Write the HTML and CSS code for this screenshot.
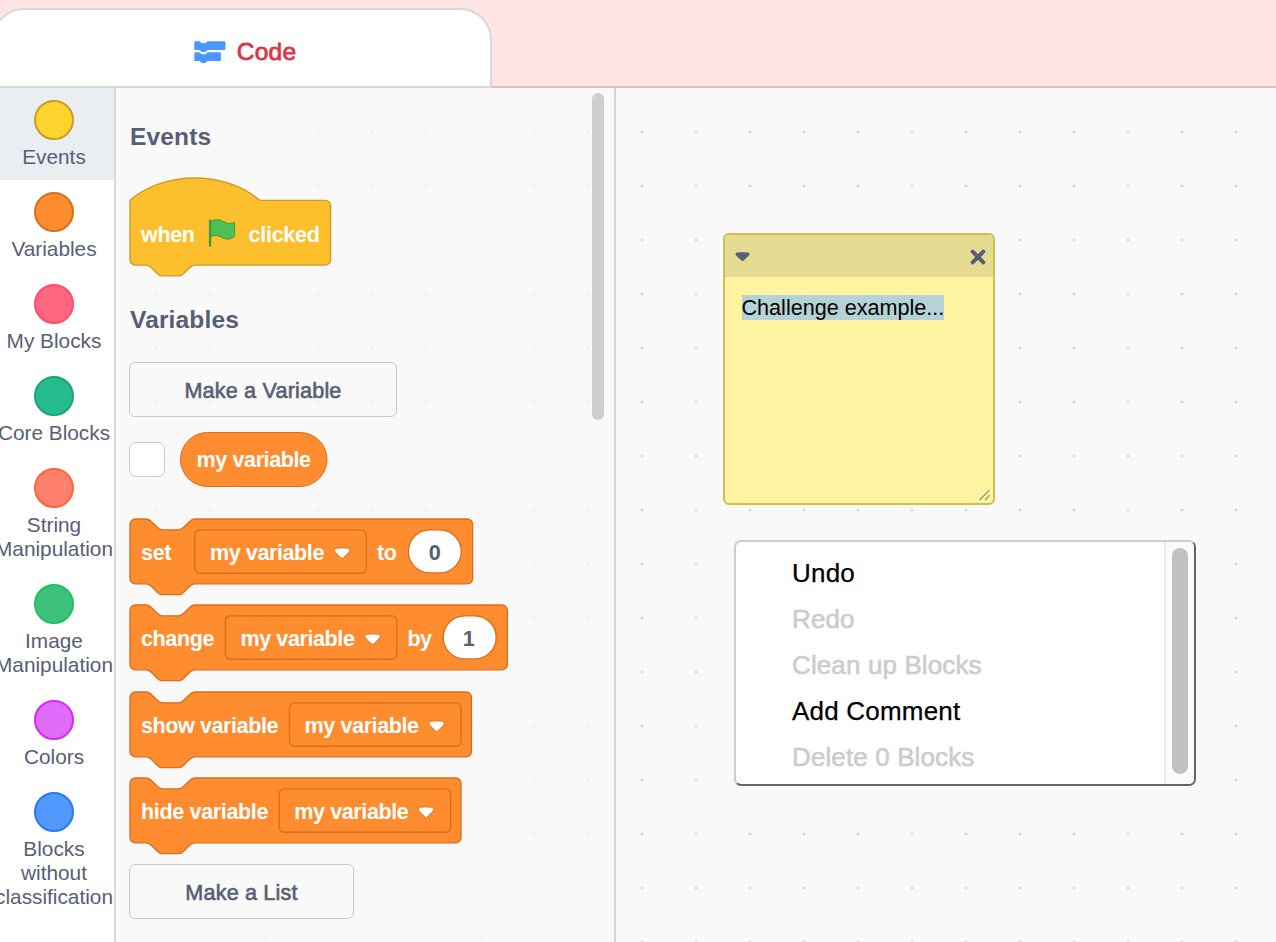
FILE: index.html
```html
<!DOCTYPE html>
<html lang="en">
<head>
<meta charset="utf-8">
<title>Code editor</title>
<link rel="stylesheet" href="styles.css">
</head>
<body>
<svg class="defs" aria-hidden="true">
  <defs>
    <g id="caret">
      <path transform="scale(1.35)" fill="#231f20" opacity=".1" d="M12.71,2.44A2.41,2.41,0,0,1,12,4.16L8.08,8.08a2.45,2.45,0,0,1-3.45,0L0.72,4.16A2.42,2.42,0,0,1,0,2.44,2.48,2.48,0,0,1,.71.71C1,0.47,1.43,0,6.36,0S11.75,0.46,12,.71A2.44,2.44,0,0,1,12.71,2.44Z"/>
      <path transform="scale(1.35)" fill="#fff" d="M6.36,7.79a1.43,1.43,0,0,1-1-.42L1.42,3.45a1.44,1.44,0,0,1,0-2c0.56-.56,9.31-0.56,9.87,0a1.44,1.44,0,0,1,0,2L7.37,7.37A1.43,1.43,0,0,1,6.36,7.79Z"/>
    </g>
  </defs>
</svg>
<div class="app">
  <header class="tabs">
    <div class="tab">
      <svg class="tab-icon" width="32" height="22" viewBox="0 0 32 22" fill="#4c97ff">
        <path d="M1.2 .3H5.2C6.4 .3 6.6 2.2 8 2.2H11C12.4 2.2 12.6 .3 14 .3H30.6Q31.5 .3 31.5 1.2V8Q31.5 9 30.6 9H14C12.6 9 12.6 11 11 11H8C6.6 11 6.4 9 5.2 9H1.2Q.3 9 .3 8V1.2Q.3 .3 1.2 .3Z"/>
        <path d="M1.2 11.3H5.2C6.4 11.3 6.6 13.2 8 13.2H11C12.4 13.2 12.6 11.3 14 11.3H26Q26.9 11.3 26.9 12.2V19Q26.9 20 26 20H14C12.6 20 12.6 21.9 11 21.9H8C6.6 21.9 6.4 20 5.2 20H1.2Q.3 20 .3 19V12.2Q.3 11.3 1.2 11.3Z"/>
      </svg>
      <span>Code</span>
    </div>
  </header>
  <main class="editor">
    <nav class="categories">
      <div class="category selected"><i class="bubble events"></i><span>Events</span></div>
      <div class="category"><i class="bubble variables"></i><span>Variables</span></div>
      <div class="category"><i class="bubble my-blocks"></i><span>My Blocks</span></div>
      <div class="category"><i class="bubble core"></i><span>Core Blocks</span></div>
      <div class="category"><i class="bubble string"></i><span>String<br>Manipulation</span></div>
      <div class="category"><i class="bubble image"></i><span>Image<br>Manipulation</span></div>
      <div class="category"><i class="bubble colors"></i><span>Colors</span></div>
      <div class="category"><i class="bubble other"></i><span>Blocks<br>without<br>classification</span></div>
    </nav>

    <section class="flyout">
      <div class="palette">
        <h2>Events</h2>
        <svg class="block hat" width="202" height="88">
          <path class="yellow" transform="translate(0 22.3) scale(1.35)" d="M0,0C25,-22 71,-22 96,0H144.6a4,4 0 0 1 4,4V44a4,4 0 0 1 -4,4H48c-2,0 -3,1 -4,2l-4,4c-1,1 -2,2 -4,2h-12c-2,0 -3,-1 -4,-2l-4,-4c-1,-1 -2,-2 -4,-2H4a4,4 0 0 1 -4,-4Z"/>
          <text x="11" y="63.5" textLength="54">when</text>
          <path fill="#4cbf56" stroke="#45993d" stroke-width="1" d="M80.5 43.500C85 41 90 41.200 94 43.800C98 46.300 101 45.800 103.500 44.400Q104.700 43.800 104.700 45V57.500Q104.700 58.700 103.700 59.300C99 62 95 61.300 91.500 59.300C88 57 84 56.800 80.500 59Z"/>
          <path fill="none" stroke="#45993d" stroke-width="2.4" stroke-linecap="round" d="M80.1 42.5V67.500"/>
          <text x="118.500" y="63.500" textLength="71.500">clicked</text>
        </svg>
        <h2 class="second">Variables</h2>
        <div class="button wide">Make a Variable</div>
        <div class="variable-row">
          <i class="checkbox"></i>
          <svg class="block reporter" width="148" height="55">
            <rect class="orange" x=".5" y=".5" width="146.500" height="54" rx="27"/>
            <text x="16.600" y="35" textLength="114.500">my variable</text>
          </svg>
        </div>
        <svg class="block stack" width="343" height="65">
          <path class="orange" transform="scale(1.35)" d="M0,4A4,4 0 0 1 4,0H12c2,0 3,1 4,2l4,4c1,1 2,2 4,2h12c2,0 3,-1 4,-2l4,-4c1,-1 2,-2 4,-2H249.800a4,4 0 0 1 4,4V44a4,4 0 0 1 -4,4H48c-2,0 -3,1 -4,2l-4,4c-1,1 -2,2 -4,2h-12c-2,0 -3,-1 -4,-2l-4,-4c-1,-1 -2,-2 -4,-2H4a4,4 0 0 1 -4,-4Z"/>
          <text x="11" y="40.500" textLength="30.500">set</text>
          <rect class="field" x="64.800" y="10.800" width="171.500" height="43.400" rx="5"/>
          <text x="79.900" y="40.500" textLength="114.500">my variable</text>
          <use href="#caret" x="203.500" y="28.200"/>
          <text x="247" y="40.500" textLength="20">to</text>
          <rect class="input" x="278.300" y="10.900" width="53" height="43" rx="21.500"/>
          <text class="value" x="304.800" y="40.500">0</text>
        </svg>
        <svg class="block stack" width="378" height="65">
          <path class="orange" transform="scale(1.35)" d="M0,4A4,4 0 0 1 4,0H12c2,0 3,1 4,2l4,4c1,1 2,2 4,2h12c2,0 3,-1 4,-2l4,-4c1,-1 2,-2 4,-2H275.500a4,4 0 0 1 4,4V44a4,4 0 0 1 -4,4H48c-2,0 -3,1 -4,2l-4,4c-1,1 -2,2 -4,2h-12c-2,0 -3,-1 -4,-2l-4,-4c-1,-1 -2,-2 -4,-2H4a4,4 0 0 1 -4,-4Z"/>
          <text x="11" y="40.500" textLength="73.500">change</text>
          <rect class="field" x="95.300" y="10.800" width="171.500" height="43.400" rx="5"/>
          <text x="110.400" y="40.500" textLength="114.500">my variable</text>
          <use href="#caret" x="234" y="28.200"/>
          <text x="277.500" y="40.500" textLength="24.500">by</text>
          <rect class="input" x="313.200" y="10.900" width="53" height="43" rx="21.500"/>
          <text class="value" x="338.800" y="40.500">1</text>
        </svg>
        <svg class="block stack" width="342" height="65">
          <path class="orange" transform="scale(1.35)" d="M0,4A4,4 0 0 1 4,0H12c2,0 3,1 4,2l4,4c1,1 2,2 4,2h12c2,0 3,-1 4,-2l4,-4c1,-1 2,-2 4,-2H248.900a4,4 0 0 1 4,4V44a4,4 0 0 1 -4,4H48c-2,0 -3,1 -4,2l-4,4c-1,1 -2,2 -4,2h-12c-2,0 -3,-1 -4,-2l-4,-4c-1,-1 -2,-2 -4,-2H4a4,4 0 0 1 -4,-4Z"/>
          <text x="11" y="40.500" textLength="137.500">show variable</text>
          <rect class="field" x="159.500" y="10.800" width="171.500" height="43.400" rx="5"/>
          <text x="174.600" y="40.500" textLength="114.500">my variable</text>
          <use href="#caret" x="298" y="28.200"/>
        </svg>
        <svg class="block stack" width="332" height="65">
          <path class="orange" transform="scale(1.35)" d="M0,4A4,4 0 0 1 4,0H12c2,0 3,1 4,2l4,4c1,1 2,2 4,2h12c2,0 3,-1 4,-2l4,-4c1,-1 2,-2 4,-2H241.200a4,4 0 0 1 4,4V44a4,4 0 0 1 -4,4H48c-2,0 -3,1 -4,2l-4,4c-1,1 -2,2 -4,2h-12c-2,0 -3,-1 -4,-2l-4,-4c-1,-1 -2,-2 -4,-2H4a4,4 0 0 1 -4,-4Z"/>
          <text x="11" y="40.500" textLength="127.500">hide variable</text>
          <rect class="field" x="149.200" y="10.800" width="171.500" height="43.400" rx="5"/>
          <text x="164.300" y="40.500" textLength="114.500">my variable</text>
          <use href="#caret" x="287.500" y="28.200"/>
        </svg>
        <div class="button list">Make a List</div>
      </div>
      <i class="flyout-thumb"></i>
    </section>

    <section class="workspace">
      <article class="comment">
        <header>
          <svg width="15" height="10" viewBox="0 0 15 10"><path fill="#575e75" d="M1.500 .6Q7.500 -.1 13.500 .6Q15.300 1.700 13.800 3.400L9 8.300Q7.500 9.500 6 8.300L1.200 3.400Q-.3 1.700 1.500 .6Z"/></svg>
          <svg width="16" height="16" viewBox="0 0 16 16"><path stroke="#575e75" stroke-width="4" stroke-linecap="round" d="M2.700 2.700L13.300 13.300M13.300 2.700L2.700 13.300"/></svg>
        </header>
        <p><mark>Challenge example...</mark></p>
        <svg class="resize" width="12" height="12" viewBox="0 0 12 12"><path stroke="#96916e" stroke-width="1.200" d="M.7 11L10.500 .8M6.200 11L10.700 6.200"/></svg>
      </article>
      <div class="menu">
        <ul>
          <li>Undo</li>
          <li class="disabled">Redo</li>
          <li class="disabled">Clean up Blocks</li>
          <li>Add Comment</li>
          <li class="disabled">Delete 0 Blocks</li>
        </ul>
        <div class="menu-track"><i></i></div>
      </div>
    </section>
  </main>
</div>
</body>
</html>
```

FILE: styles.css
```css
* { box-sizing: border-box; }
body {
  margin: 0;
  overflow: hidden;
  font-family: "Liberation Sans", Helvetica, Arial, sans-serif;
  color: #575e75;
}
.defs { display: block; width: 0; height: 0; }
.app { display: flex; flex-direction: column; width: 1276px; height: 942px; overflow: hidden; }

/* Tab bar */
.tabs {
  display: flex;
  align-items: flex-end;
  height: 88px;
  flex: none;
  background: #ffe4e4;
  background-image: linear-gradient(#d9c3c3, #d9c3c3);
  background-size: 100% 2px;
  background-position: bottom;
  background-repeat: no-repeat;
}
.tab {
  display: flex;
  align-items: center;
  justify-content: center;
  gap: 11px;
  width: 500px;
  height: 80px;
  margin-left: -8px;
  padding-top: 7px;
  padding-left: 6px;
  background: #fff;
  border: 2px solid #d9d9d9;
  border-radius: 32px 32px 0 0;
  color: #dc3545;
  font-size: 24.500px;
  letter-spacing: .25px;
  -webkit-text-stroke: .8px #dc3545;
}
.tab-icon { flex: none; }

/* Category list */
.editor { display: flex; flex: 1; min-height: 0; }
.categories {
  width: 116px;
  flex: none;
  overflow: hidden;
  background: #fff;
  border-right: 2px solid #d9d9d9;
}
.category {
  display: flex;
  flex-direction: column;
  align-items: center;
  gap: 5px;
  margin-left: -6px;
  padding: 12px 0 11px;
  font-size: 20.800px;
  line-height: 24px;
  text-align: center;
  white-space: nowrap;
}
.selected { background: #e9eef2; }
.bubble { width: 40px; height: 40px; border: 2px solid; border-radius: 50%; }
.events { background: #ffd42e; border-color: #cc9b22; }
.variables { background: #ff8c2e; border-color: #db6e1b; }
.my-blocks { background: #ff6680; border-color: #ff4d6a; }
.core { background: #24bc8c; border-color: #1fa278; }
.string { background: #ff816b; border-color: #ff6440; }
.image { background: #3dc17d; border-color: #20c05b; }
.colors { background: #e26cfa; border-color: #dc26f8; }
.other { background: #5199ff; border-color: #2878f8; }

/* Block palette */
.flyout {
  display: flex;
  justify-content: space-between;
  width: 500px;
  flex: none;
  padding: 5px 10px 0 14px;
  border-right: 2px solid #d3d3d3;
  background: #f9f9f9 radial-gradient(circle, #f1f1f1 1px, transparent 1.900px) 13px 17px / 54px 54px;
}
.palette { display: flex; flex-direction: column; align-items: flex-start; width: 400px; }
.palette h2 {
  margin: 28.500px 0 0;
  font-size: 24.500px;
  line-height: 30px;
  letter-spacing: .15px;
}
.palette .second { margin-top: 39px; }
.flyout-thumb { width: 12px; height: 327px; border-radius: 6px; background: #cecece; }
.block { display: block; flex: none; overflow: visible; }
.block text { fill: #fff; font-size: 21.600px; font-weight: bold; }
.block .value { fill: #575e75; text-anchor: middle; }
.hat { margin-top: 26px; }
.yellow { fill: #fdbf2d; stroke: #cc9b22; }
.orange { fill: #ff8c2e; stroke: #db6e1b; }
.field { fill: #ff8c2e; stroke: #db6e1b; stroke-width: 1.350px; }
.input { fill: #fff; stroke: #db6e1b; stroke-width: 1.350px; }
.button {
  display: flex;
  align-items: center;
  justify-content: center;
  flex: none;
  height: 55px;
  padding-top: 3px;
  border: 1.500px solid #c9c9c9;
  border-radius: 6px;
  font-size: 21.600px;
  letter-spacing: .18px;
  -webkit-text-stroke: .6px #575e75;
}
.wide { width: 268px; margin: 27px 0 0 -1px; }
.list { width: 225px; margin: -.500px 0 0 -1px; }
.variable-row {
  display: flex;
  align-items: center;
  gap: 15px;
  height: 56px;
  margin: 15px 0 31.500px -1px;
}
.checkbox { width: 36px; height: 35px; border: 1.500px solid #c9c9c9; border-radius: 7px; background: #fff; }
.stack { margin-bottom: 21.400px; }

/* Workspace */
.workspace {
  position: relative;
  flex: 1;
  background: #f9f9f9 radial-gradient(circle, #dadada 1px, transparent 1.900px) -1px 17px / 54px 54px;
}
.comment {
  position: absolute;
  left: 107px;
  top: 145px;
  width: 272px;
  height: 272px;
  border: 2px solid #cdbf51;
  border-radius: 6px;
  background: #fef3a1;
  overflow: hidden;
}
.comment header {
  display: flex;
  align-items: center;
  justify-content: space-between;
  height: 42px;
  padding: 2px 7px 0 10px;
  background: #e4da91;
}
.comment p { margin: 19px 16.500px; font-size: 21.600px; line-height: 24px; white-space: nowrap; }
.comment mark { background: #b4d3d6; color: #000; }
.resize { position: absolute; right: 2px; bottom: 2px; }
.menu {
  position: absolute;
  left: 118px;
  top: 452px;
  display: flex;
  width: 462px;
  height: 246px;
  border: 2px solid;
  border-color: #ccc #666 #666 #ccc;
  border-radius: 7px;
  background: #fff;
  overflow: hidden;
}
.menu ul { flex: 1; margin: 0; padding: 8px 0 0 56px; list-style: none; }
.menu li { height: 46px; color: #000; font-size: 26px; line-height: 46px; letter-spacing: .2px; -webkit-text-stroke: .25px; }
.menu .disabled { color: #ccc; letter-spacing: .12px; -webkit-text-stroke: .6px; }
.menu-track { width: 30px; padding: 6px 0 0 6px; border-left: 2px solid #e8e8e8; background: #fafafa; }
.menu-track i { display: block; width: 16px; height: 226px; border-radius: 8px; background: #c1c1c1; }
```
